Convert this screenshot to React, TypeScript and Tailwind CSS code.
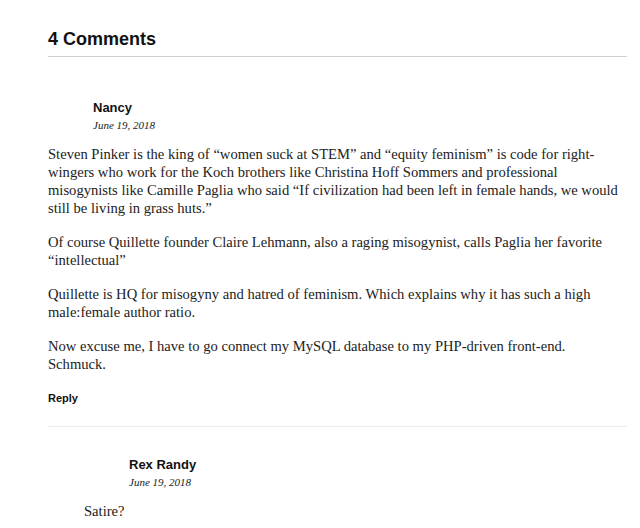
const sans = { fontFamily: '"Liberation Sans", Arial, sans-serif' };
const serif = { fontFamily: '"Liberation Serif", "Times New Roman", serif' };

type CommentProps = {
  author: string;
  date: string;
  paragraphs: string[];
  reply?: boolean;
};

function Comment({ author, date, paragraphs, reply }: CommentProps) {
  return (
    <div>
      <div className="pl-[45px]">
        <p className="text-[13px] font-bold leading-[18px] text-[#111]" style={sans}>
          {author}
        </p>
        <p className="text-[11px] italic leading-[16px] text-[#222]" style={serif}>
          {date}
        </p>
      </div>
      <div className="mt-[12px] w-[570px] space-y-[16px] text-[14.6px] leading-[18px] text-[#222]" style={serif}>
        {paragraphs.map((p, i) => (
          <p key={i}>{p}</p>
        ))}
      </div>
      {reply && (
        <p className="mt-[17px] text-[11px] font-bold leading-[16px] text-[#111]" style={sans}>
          Reply
        </p>
      )}
    </div>
  );
}

export default function App() {
  return (
    <div className="min-h-[528px] bg-white pl-[48px] pt-[27px]">
      <div className="w-[579px]">
        <h2 className="text-[18px] font-bold leading-[24px] text-[#111]" style={sans}>
          4 Comments
        </h2>
        <div className="mt-[5px] border-t border-[#cfcfcf]" />

        <div className="pt-[42px] pb-[20px]">
          <Comment
            author="Nancy"
            date="June 19, 2018"
            reply
            paragraphs={[
              "Steven Pinker is the king of “women suck at STEM” and “equity feminism” is code for right-wingers who work for the Koch brothers like Christina Hoff Sommers and professional misogynists like Camille Paglia who said “If civilization had been left in female hands, we would still be living in grass huts.”",
              "Of course Quillette founder Claire Lehmann, also a raging misogynist, calls Paglia her favorite “intellectual”",
              "Quillette is HQ for misogyny and hatred of feminism. Which explains why it has such a high male:female author ratio.",
              "Now excuse me, I have to go connect my MySQL database to my PHP-driven front-end. Schmuck.",
            ]}
          />
        </div>

        <div className="border-t border-[#ececec]" />

        <div className="pl-[36px] pt-[29px]">
          <Comment author="Rex Randy" date="June 19, 2018" paragraphs={["Satire?"]} />
        </div>
      </div>
    </div>
  );
}
